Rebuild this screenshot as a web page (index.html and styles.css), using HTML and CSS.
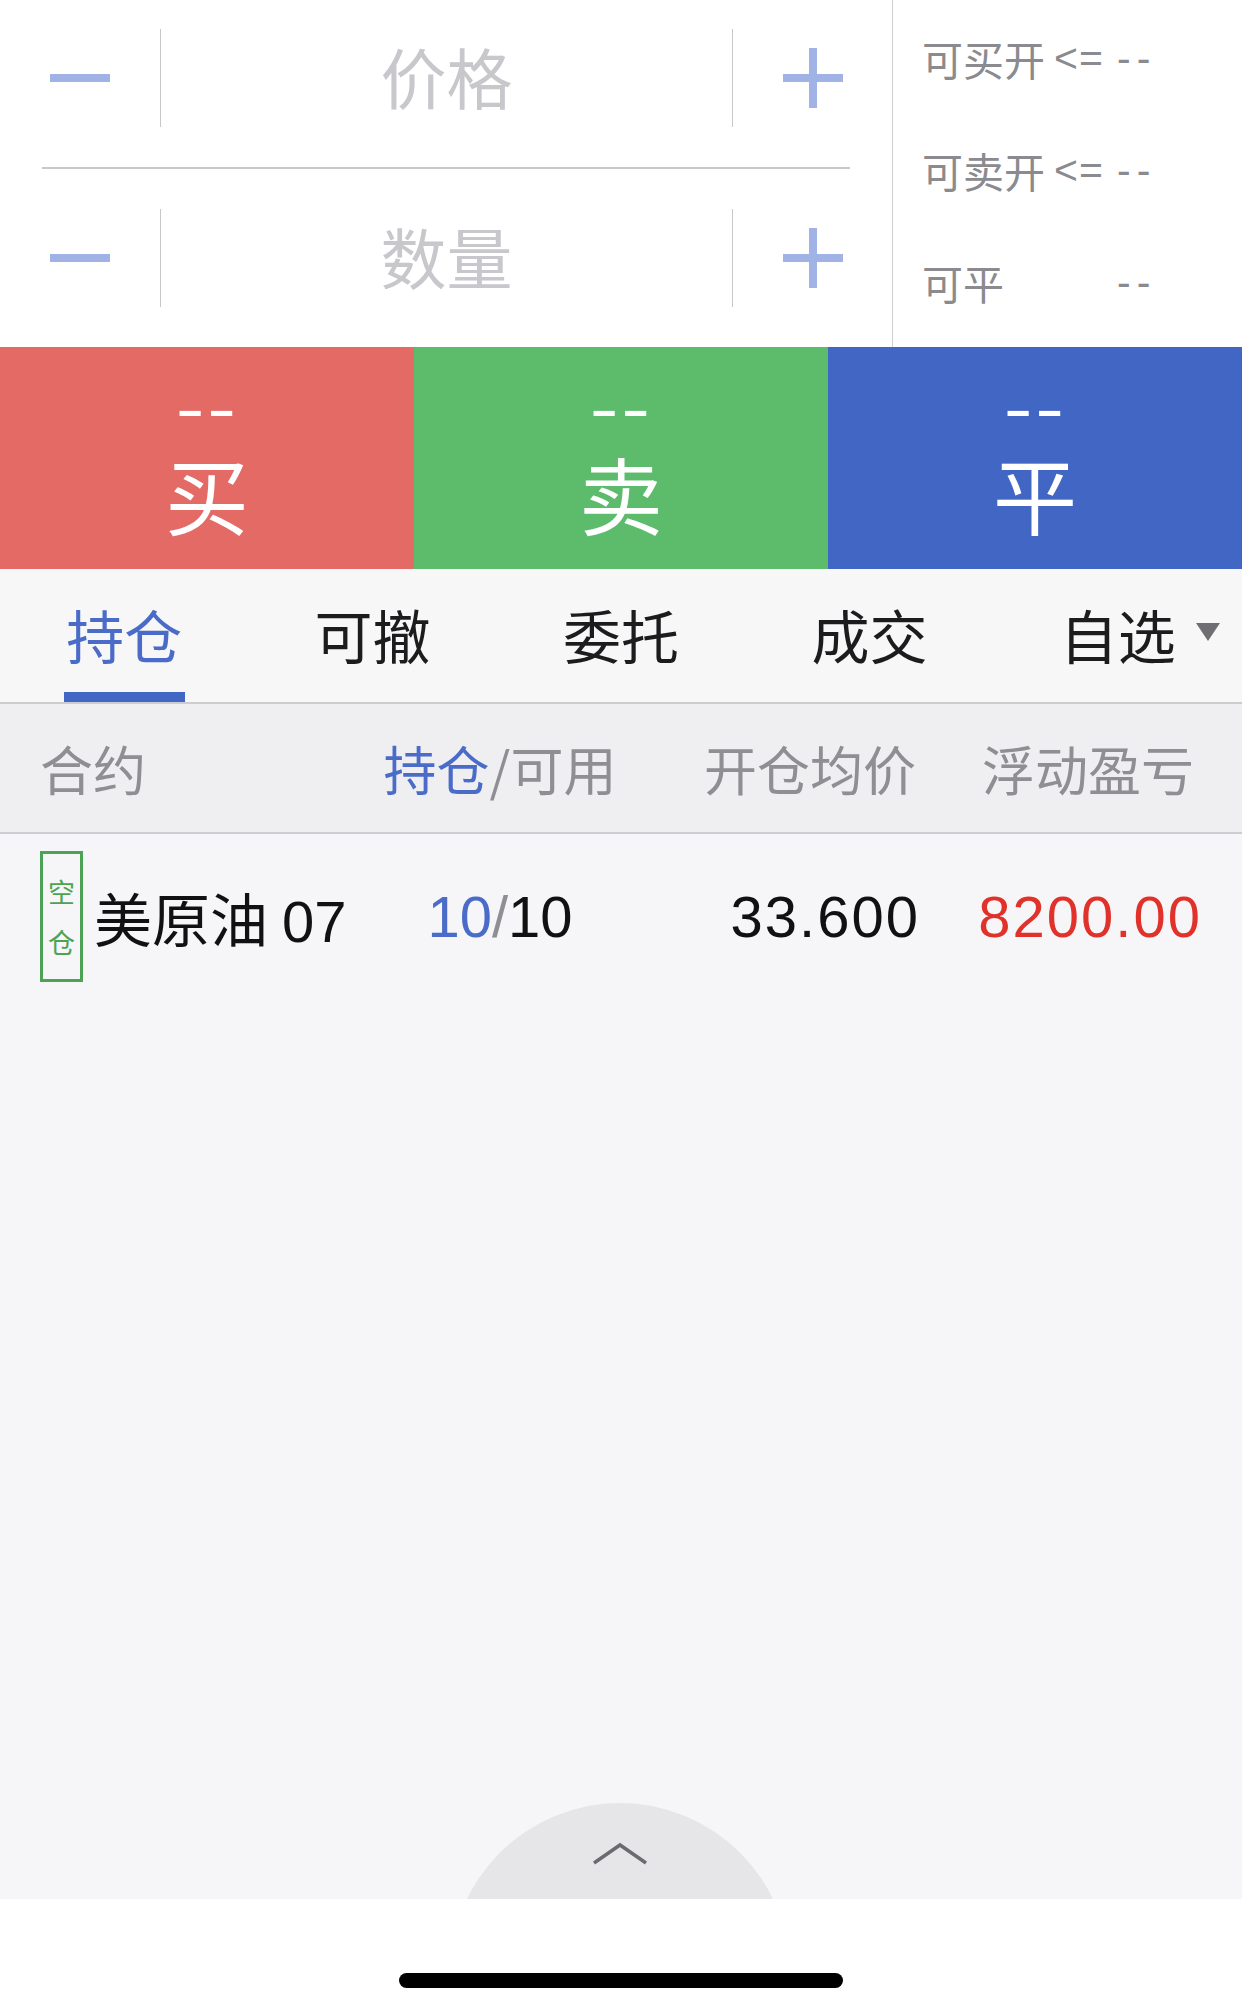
FILE: index.html
```html
<!DOCTYPE html>
<html lang="zh-CN">
<head>
<meta charset="utf-8">
<title>交易</title>
<link rel="stylesheet" href="styles.css">
</head>
<body>
<div class="page">
  <section class="top">
    <div class="inputs">
      <div class="stepper first">
        <div class="step-btn"><span class="minus"></span></div>
        <div class="vline"></div>
        <div class="field">价格</div>
        <div class="vline"></div>
        <div class="step-btn"><span class="plus"></span></div>
      </div>
      <div class="hsep"></div>
      <div class="stepper">
        <div class="step-btn"><span class="minus"></span></div>
        <div class="vline"></div>
        <div class="field">数量</div>
        <div class="vline"></div>
        <div class="step-btn"><span class="plus"></span></div>
      </div>
    </div>
    <div class="info">
      <div class="info-line"><span class="info-label">可买开</span><span class="info-op">&lt;=</span><span class="info-val">--</span></div>
      <div class="info-line"><span class="info-label">可卖开</span><span class="info-op">&lt;=</span><span class="info-val">--</span></div>
      <div class="info-line"><span class="info-label">可平</span><span class="info-op"></span><span class="info-val">--</span></div>
    </div>
  </section>

  <section class="actions">
    <div class="act buy"><div class="act-price"><span>--</span></div><div class="act-name">买</div></div>
    <div class="act sell"><div class="act-price"><span>--</span></div><div class="act-name">卖</div></div>
    <div class="act close"><div class="act-price"><span>--</span></div><div class="act-name">平</div></div>
  </section>

  <nav class="tabs">
    <div class="tab active"><span class="tab-text">持仓</span><span class="tab-bar"></span></div>
    <div class="tab"><span class="tab-text">可撤</span></div>
    <div class="tab"><span class="tab-text">委托</span></div>
    <div class="tab"><span class="tab-text">成交</span></div>
    <div class="tab"><span class="tab-text">自选<span class="caret"></span></span></div>
  </nav>

  <div class="thead">
    <div class="c1">合约</div>
    <div class="c2"><span class="blue">持仓</span>/可用</div>
    <div class="c3">开仓均价</div>
    <div class="c4">浮动盈亏</div>
  </div>

  <div class="content">
    <div class="row">
      <div class="c1 contract">
        <span class="tag"><span>空</span><span>仓</span></span>
        <span class="name">美原油<span class="code">07</span></span>
      </div>
      <div class="c2 num"><span class="blue">10</span><span class="slash">/</span>10</div>
      <div class="c3 num">33.600</div>
      <div class="c4 num red">8200.00</div>
    </div>
    <div class="pull">
      <svg class="chev" width="56" height="24" viewBox="0 0 56 24"><polyline points="2,22 28,4 54,22" fill="none" stroke="#6b6b6f" stroke-width="3.5"/></svg>
    </div>
  </div>

  <footer class="footer"><div class="home-bar"></div></footer>
</div>
</body>
</html>
```

FILE: styles.css
```css
* { box-sizing: border-box; }
html, body { margin: 0; padding: 0; }
body {
  width: 1242px;
  height: 2011px;
  overflow: hidden;
  background: #fff;
  font-family: "Liberation Sans", "Noto Sans CJK SC", sans-serif;
}
.page {
  display: flex;
  flex-direction: column;
  height: 2011px;
}

/* top input area */
.top {
  display: flex;
  height: 347px;
  background: #fff;
}
.inputs {
  width: 893px;
  border-right: 1px solid #cfcfd3;
}
.stepper {
  display: flex;
  align-items: center;
  padding: 40px 0;
  height: 178px;
}
.stepper.first {
  padding-top: 29px;
  height: 167px;
}
.step-btn {
  width: 160px;
  height: 98px;
  display: flex;
  align-items: center;
  justify-content: center;
}
.stepper .step-btn:last-child { width: 159px; }
.vline {
  width: 1px;
  height: 98px;
  background: #c8c8cc;
}
.field {
  flex: 1;
  height: 98px;
  padding-bottom: 6px;
  text-align: center;
  font-family: "Noto Sans CJK SC", sans-serif;
  font-size: 66px;
  line-height: 92px;
  color: #c7c7cc;
}
.minus {
  display: block;
  width: 60px;
  height: 8px;
  background: #a1b3e4;
}
.plus {
  display: block;
  position: relative;
  width: 60px;
  height: 60px;
  margin-left: 1px;
}
.plus::before, .plus::after {
  content: "";
  position: absolute;
  background: #a1b3e4;
}
.plus::before { left: 0; right: 0; top: 26px; height: 8px; }
.plus::after { top: 0; bottom: 0; left: 26px; width: 8px; }
.hsep {
  height: 2px;
  margin: 0 42px;
  background: #c8c8cc;
}

.info {
  flex: 1;
  padding: 2px 0 0 29px;
  color: #8a8a8f;
  font-size: 41px;
}
.info-line {
  display: flex;
  height: 112px;
  align-items: center;
  white-space: nowrap;
}
.info-label {
  width: 132px;
  font-family: "Noto Sans CJK SC", sans-serif;
}
.info-op { width: 63px; letter-spacing: 1px; }
.info-val { letter-spacing: 6px; }

/* action buttons */
.actions {
  display: flex;
  height: 222px;
}
.act {
  flex: 1;
  color: #fff;
  text-align: center;
  padding-top: 30px;
}
.buy { background: #e46a66; }
.sell { background: #5dbb6c; }
.close { background: #4166c4; }
.act-price {
  font-family: "Liberation Sans", sans-serif;
  font-size: 64px;
  line-height: 64px;
  height: 64px;
}
.act-price span {
  display: inline-block;
  letter-spacing: 2px;
  transform: scaleX(1.35);
}
.act-name {
  margin-top: 10px;
  font-family: "Noto Sans CJK SC", sans-serif;
  font-size: 84px;
  line-height: 84px;
}

/* tabs */
.tabs {
  display: flex;
  height: 135px;
  background: #f7f7f8;
  border-bottom: 2px solid #cdcdd1;
}
.tab {
  flex: 1;
  position: relative;
  text-align: center;
  padding-top: 36px;
  font-family: "Noto Sans CJK SC", sans-serif;
  font-size: 58px;
  line-height: 58px;
  color: #1c1c1e;
}
.tab.active { color: #4a6cc8; }
.tab-text { position: relative; }
.tab-bar {
  position: absolute;
  left: 50%;
  bottom: 0;
  width: 121px;
  height: 10px;
  margin-left: -60px;
  background: #4166c4;
}
.caret {
  position: absolute;
  left: 100%;
  top: 31px;
  margin-left: 20px;
  width: 0;
  height: 0;
  border-left: 12px solid transparent;
  border-right: 12px solid transparent;
  border-top: 18px solid #6e6e73;
}

/* table */
.thead, .row {
  display: grid;
  grid-template-columns: 340px 240px 300px 1fr;
  padding: 0 40px;
  align-items: center;
}
.thead {
  height: 130px;
  background: #efeff1;
  border-bottom: 2px solid #cdcdd1;
  font-family: "Noto Sans CJK SC", sans-serif;
  font-size: 53px;
  color: #8e8e93;
}
.c2 { text-align: center; }
.c3, .c4 { text-align: right; }
.thead .c3 { padding-right: 4px; }
.thead .c4 { padding-right: 8px; }
.blue { color: #4a6cc8; }
.red { color: #e0322b; }

.content {
  flex: 1;
  position: relative;
  overflow: hidden;
  background: #f6f6f8;
}
.row {
  padding-top: 17px;
  height: 148px;
}
.contract {
  display: flex;
  align-items: center;
}
.tag {
  display: flex;
  flex-direction: column;
  justify-content: center;
  width: 43px;
  height: 131px;
  border: 3px solid #4ea254;
  color: #4ea254;
  font-family: "Noto Sans CJK SC", sans-serif;
  font-size: 27px;
  line-height: 50px;
  text-align: center;
}
.name {
  margin-left: 11px;
  font-family: "Noto Sans CJK SC", sans-serif;
  font-size: 58px;
  color: #111;
}
.code {
  margin-left: 14px;
  font-family: "Liberation Sans", sans-serif;
}
.num {
  font-size: 58px;
  color: #111;
  letter-spacing: 2px;
}
.c2.num { letter-spacing: 0; }
.num.red { color: #e0322b; }
.slash { color: #8e8e93; }

.pull {
  position: absolute;
  left: 450px;
  bottom: -244px;
  width: 340px;
  height: 340px;
  border-radius: 50%;
  background: #e6e6e9;
}
.chev {
  position: absolute;
  left: 142px;
  top: 38px;
}

.footer {
  height: 112px;
  background: #fff;
  padding-top: 74px;
}
.home-bar {
  width: 444px;
  height: 15px;
  margin: 0 auto;
  border-radius: 8px;
  background: #000;
}
```
